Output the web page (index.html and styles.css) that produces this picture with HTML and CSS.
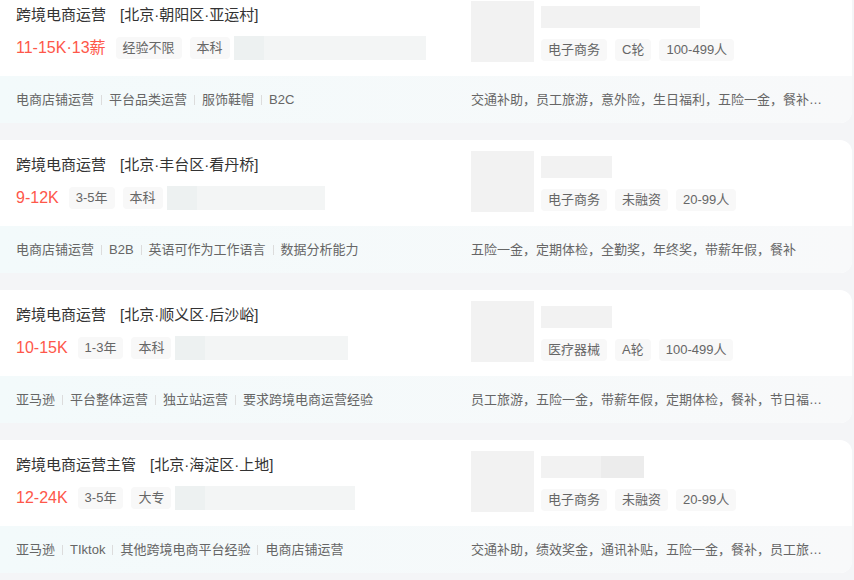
FILE: index.html
```html
<!DOCTYPE html>
<html lang="zh-CN">
<head>
    <meta charset="utf-8">
    <title>跨境电商运营 - 职位列表</title>
    <meta name="viewport" content="width=device-width, initial-scale=1">
    <link rel="stylesheet" href="styles.css">
</head>
<body>
    <ul class="job-list">
        <li class="job-card">
            <div class="job-main">
                <div class="job-info">
                    <div class="job-title">
                        <span class="job-name">跨境电商运营</span>
                        <span class="job-area">[北京·朝阳区·亚运村]</span>
                    </div>
                    <div class="job-limit">
                        <span class="salary">11-15K·13薪</span>
                        <span class="tag">经验不限</span>
                        <span class="tag">本科</span>
                        <span class="masked" style="width:192px"></span>
                    </div>
                </div>
                <div class="company">
                    <div class="logo"></div>
                    <div class="company-info">
                        <div class="company-name" style="width:159px"></div>
                        <div class="company-tags">
                            <span class="tag">电子商务</span>
                            <span class="tag">C轮</span>
                            <span class="tag">100-499人</span>
                        </div>
                    </div>
                </div>
            </div>
            <div class="job-footer">
                <div class="skills">
                    <span>电商店铺运营</span><span>平台品类运营</span><span>服饰鞋帽</span><span>B2C</span>
                </div>
                <div class="welfare">交通补助，员工旅游，意外险，生日福利，五险一金，餐补，节日福利，包吃</div>
            </div>
        </li>
        <li class="job-card">
            <div class="job-main">
                <div class="job-info">
                    <div class="job-title">
                        <span class="job-name">跨境电商运营</span>
                        <span class="job-area">[北京·丰台区·看丹桥]</span>
                    </div>
                    <div class="job-limit">
                        <span class="salary">9-12K</span>
                        <span class="tag">3-5年</span>
                        <span class="tag">本科</span>
                        <span class="masked" style="width:158px"></span>
                    </div>
                </div>
                <div class="company">
                    <div class="logo"></div>
                    <div class="company-info">
                        <div class="company-name" style="width:71px"></div>
                        <div class="company-tags">
                            <span class="tag">电子商务</span>
                            <span class="tag">未融资</span>
                            <span class="tag">20-99人</span>
                        </div>
                    </div>
                </div>
            </div>
            <div class="job-footer">
                <div class="skills">
                    <span>电商店铺运营</span><span>B2B</span><span>英语可作为工作语言</span><span>数据分析能力</span>
                </div>
                <div class="welfare">五险一金，定期体检，全勤奖，年终奖，带薪年假，餐补</div>
            </div>
        </li>
        <li class="job-card">
            <div class="job-main">
                <div class="job-info">
                    <div class="job-title">
                        <span class="job-name">跨境电商运营</span>
                        <span class="job-area">[北京·顺义区·后沙峪]</span>
                    </div>
                    <div class="job-limit">
                        <span class="salary">10-15K</span>
                        <span class="tag">1-3年</span>
                        <span class="tag">本科</span>
                        <span class="masked" style="width:173px"></span>
                    </div>
                </div>
                <div class="company">
                    <div class="logo"></div>
                    <div class="company-info">
                        <div class="company-name" style="width:71px"></div>
                        <div class="company-tags">
                            <span class="tag">医疗器械</span>
                            <span class="tag">A轮</span>
                            <span class="tag">100-499人</span>
                        </div>
                    </div>
                </div>
            </div>
            <div class="job-footer">
                <div class="skills">
                    <span>亚马逊</span><span>平台整体运营</span><span>独立站运营</span><span>要求跨境电商运营经验</span>
                </div>
                <div class="welfare">员工旅游，五险一金，带薪年假，定期体检，餐补，节日福利，交通补助</div>
            </div>
        </li>
        <li class="job-card">
            <div class="job-main">
                <div class="job-info">
                    <div class="job-title">
                        <span class="job-name">跨境电商运营主管</span>
                        <span class="job-area">[北京·海淀区·上地]</span>
                    </div>
                    <div class="job-limit">
                        <span class="salary">12-24K</span>
                        <span class="tag">3-5年</span>
                        <span class="tag">大专</span>
                        <span class="masked" style="width:180px"></span>
                    </div>
                </div>
                <div class="company">
                    <div class="logo"></div>
                    <div class="company-info">
                        <div class="company-name two-tone" style="width:103px"></div>
                        <div class="company-tags">
                            <span class="tag">电子商务</span>
                            <span class="tag">未融资</span>
                            <span class="tag">20-99人</span>
                        </div>
                    </div>
                </div>
            </div>
            <div class="job-footer">
                <div class="skills">
                    <span>亚马逊</span><span>TIktok</span><span>其他跨境电商平台经验</span><span>电商店铺运营</span>
                </div>
                <div class="welfare">交通补助，绩效奖金，通讯补贴，五险一金，餐补，员工旅游，带薪年假</div>
            </div>
        </li>
    </ul>
</body>
</html>
```

FILE: styles.css
```css
body {
    margin: 0;
    background: #f4f5f7;
    font-family: 'Liberation Sans', 'Noto Sans CJK SC', Arial, sans-serif;
    color: #333;
    overflow: hidden;
}
.job-list {
    list-style: none;
    margin: -10px 2px 0 0;
    padding: 0;
    display: flex;
    flex-direction: column;
    gap: 17px;
}
.job-card {
    background: #fff;
    border-radius: 0 12px 12px 0;
    overflow: hidden;
}
.job-main {
    height: 86px;
    box-sizing: border-box;
    padding: 11px 16px 0 16px;
    display: grid;
    grid-template-columns: 439px 1fr;
    column-gap: 16px;
}
.job-info {
    padding-top: 3px;
}
.job-title {
    display: flex;
    align-items: center;
    font-size: 15px;
    line-height: 22px;
    color: #333;
    white-space: nowrap;
}
.job-area {
    margin-left: 14px;
}
.job-limit {
    margin-top: 10px;
    display: flex;
    align-items: center;
    height: 24px;
}
.salary {
    font-size: 16px;
    line-height: 24px;
    color: #fe574a;
    margin-right: 10px;
}
.tag {
    display: inline-block;
    height: 22px;
    line-height: 22px;
    padding: 0 7px;
    border-radius: 4px;
    background: #f8f8f8;
    color: #666;
    font-size: 13px;
    white-space: nowrap;
}
.job-limit .tag + .tag {
    margin-left: 8px;
}
.masked {
    display: inline-block;
    height: 24px;
    margin-left: 4px;
    background: linear-gradient(90deg, #edf1f1 0, #edf1f1 30px, #f3f5f5 30px);
}
.company {
    display: flex;
    align-items: flex-start;
}
.logo {
    width: 63px;
    height: 61px;
    background: #f2f2f2;
    flex-shrink: 0;
}
.company-info {
    margin-left: 7px;
    padding-top: 5px;
}
.company-name {
    height: 22px;
    background: #f2f2f2;
}
.company-name.two-tone {
    background: linear-gradient(90deg, #f2f2f2 0, #f2f2f2 60px, #ececec 60px);
}
.company-tags {
    margin-top: 11px;
    display: flex;
    gap: 8px;
}
.job-footer {
    height: 47px;
    box-sizing: border-box;
    padding: 0 16px;
    display: grid;
    grid-template-columns: 439px 1fr;
    column-gap: 16px;
    align-items: center;
    background: linear-gradient(90deg, #f3fafb 0%, #f8f9fa 100%);
    font-size: 13px;
    line-height: 20px;
    color: #666;
}
.skills {
    white-space: nowrap;
    overflow: hidden;
}
.skills span + span::before {
    content: "";
    display: inline-block;
    width: 1px;
    height: 10px;
    margin: 0 7px;
    background: #dcdcdc;
    vertical-align: -1px;
}
.welfare {
    width: 355px;
    white-space: nowrap;
    overflow: hidden;
    text-overflow: ellipsis;
}
```
